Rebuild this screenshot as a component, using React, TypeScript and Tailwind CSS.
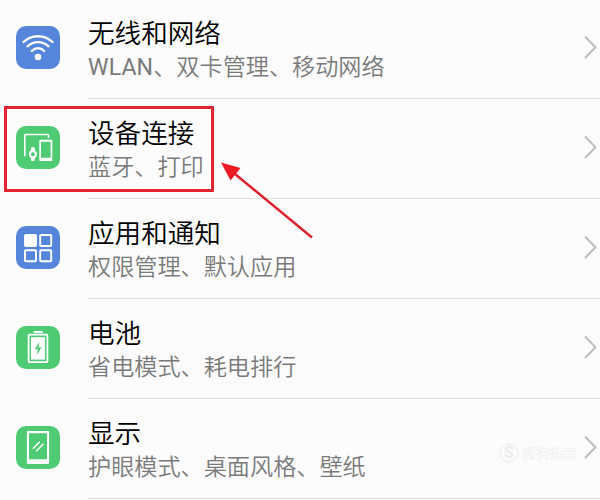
import React from "react";

const WifiIcon = () => (
  <svg width="44" height="44" viewBox="0 0 44 44" fill="none" stroke="#fff" strokeWidth="2.300" strokeLinecap="round">
    <path d="M7.500 16C16 8.300 28 8.300 36.500 16" />
    <path d="M11.500 20.300C17.500 14.600 26.500 14.600 32.500 20.300" />
    <path d="M15.800 25C19.500 21.200 24.500 21.200 28.200 25" />
    <circle cx="22" cy="31" r="3.300" fill="#fff" stroke="none" />
  </svg>
);

const DevicesIcon = () => (
  <svg width="44" height="44" viewBox="0 0 44 44" fill="none" stroke="#fff" strokeWidth="1.600">
    <path d="M8.800 30.300V9.300q0-.8.8-.8h22.100q.8 0 .8.800V11.800" />
    <path fillRule="evenodd" fill="#fff" stroke="none" d="M24.300 13.700h11q1 0 1 1v19.300q0 1-1 1h-11q-1 0-1-1V14.700q0-1 1-1zM25 15.700v16h9.600v-16z" />
    <path d="M15.300 21.300h3.200l.6 4h-4.400zM14.700 31.200h4.400l-.6 3.800h-3.200z" fill="#fff" stroke="none" />
    <circle cx="16.900" cy="28.200" r="3" strokeWidth="2" />
  </svg>
);

const AppsIcon = () => (
  <svg width="44" height="44" viewBox="0 0 44 44" fill="none" stroke="#fff" strokeWidth="1.900">
    <rect x="9" y="9" width="11" height="11" rx="0.800" fill="#fff" />
    <rect x="24.200" y="9" width="11" height="11" rx="0.800" />
    <rect x="9" y="24.200" width="11" height="11" rx="0.800" />
    <rect x="24.200" y="24.200" width="11" height="11" rx="0.800" />
  </svg>
);

const BatteryIcon = () => (
  <svg width="44" height="44" viewBox="0 0 44 44" fill="none">
    <path d="M17.700 5h9v2h-9z" fill="#fff" />
    <rect x="12.600" y="8.700" width="18.800" height="27.400" rx="0.800" stroke="#fff" strokeWidth="1.800" />
    <path d="M15 11.200h14v22.400H15z" fill="#fff" />
    <path d="M23.500 16L18.700 23.300h3.100l-1.100 5.700 4.800-7.600h-3z" fill="#4fcb74" />
  </svg>
);

const DisplayIcon = () => (
  <svg width="44" height="44" viewBox="0 0 44 44" fill="none">
    <path
      fillRule="evenodd"
      fill="#fff"
      d="M12 5h20q1.100 0 1.100 1.100v30.700q0 1.100-1.100 1.100H12q-1.100 0-1.100-1.100V6.100Q10.900 5 12 5zM13 7.300v26h18v-26z"
    />
    <path d="M17.300 22.200l6-6M20.600 24.700l6.400-6.400" stroke="#fff" strokeWidth="1.600" strokeLinecap="round" />
  </svg>
);

const items = [
  {
    title: "无线和网络",
    desc: (
      <>
        <span className="font-normal tracking-[0.1px]">WLAN</span>、双卡管理、移动网络
      </>
    ),
    color: "bg-[#5586db]",
    icon: <WifiIcon />,
  },
  { title: "设备连接", desc: "蓝牙、打印", color: "bg-[#4fcb74]", icon: <DevicesIcon /> },
  { title: "应用和通知", desc: "权限管理、默认应用", color: "bg-[#5586db]", icon: <AppsIcon /> },
  { title: "电池", desc: "省电模式、耗电排行", color: "bg-[#4fcb74]", icon: <BatteryIcon /> },
  { title: "显示", desc: "护眼模式、桌面风格、壁纸", color: "bg-[#4fcb74]", icon: <DisplayIcon /> },
];

const App = () => {
  return (
    <div className="relative w-[600px] h-[500px] overflow-hidden bg-[#fcfcfc] font-['Roboto','Noto_Sans_CJK_SC',sans-serif]">
      <ul className="-mt-px">
        {items.map((item) => (
          <li key={item.title} className="flex h-[100px] pl-4">
            <div className={`mt-[27px] mr-7 flex h-[43px] w-11 shrink-0 items-start justify-center rounded-[10px] ${item.color}`}>
              {item.icon}
            </div>
            <div className="flex flex-1 justify-between border-b border-[#e0e0e0]">
              <div className="pt-[17px] whitespace-nowrap">
                <h2 className="text-[26.6px] leading-9 font-[350] text-black">{item.title}</h2>
                <p className="text-[23.15px] leading-8 font-[350] text-[#7a7a7a]">{item.desc}</p>
              </div>
              <svg className="mt-[36px] mr-[2px]" width="16" height="26" viewBox="0 0 16 26" fill="none" stroke="#bdbdbd" strokeWidth="2">
                <path d="M3 1.500L13.500 12.300 3 23" />
              </svg>
            </div>
          </li>
        ))}
      </ul>

      {/* highlighted row */}
      <div className="absolute left-[4px] top-[106px] h-[86px] w-[210px] border-[3px] border-[#e32431]" />
      <svg className="absolute left-0 top-0" width="600" height="500" fill="none">
        <path d="M235 174L312 237.500" stroke="#db2430" strokeWidth="2.500" />
        <path d="M221 162.500L240.500 168 230.500 180.500z" fill="#ed1c24" />
      </svg>

      {/* watermark */}
      <div className="absolute left-[499px] top-[441px] flex items-center gap-[3px] text-[#f1f1f1]">
        <span className="flex size-5 items-center justify-center rounded-full border-2 border-[#f3f3f3] text-base leading-none font-bold text-[#ececec]">S</span>
        <span className="text-[14px] leading-6 tracking-[-0.5px]">搜狗指南</span>
      </div>
    </div>
  );
};

export default App;
